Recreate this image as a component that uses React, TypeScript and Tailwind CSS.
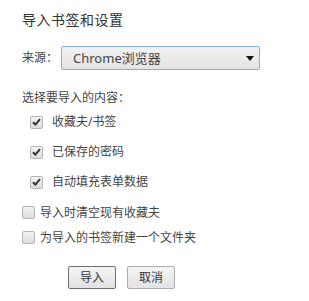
import React from "react";

const font = { fontFamily: '"Noto Sans", "Noto Sans CJK SC", sans-serif' };

function CheckBox({ checked }: { checked: boolean }) {
  return (
    <span className="relative flex h-[13px] w-[13px] items-center justify-center rounded-[2px] border border-[#b5b5b5] bg-gradient-to-b from-[#f4f4f4] to-[#dcdcdc]">
      {checked && (
        <svg width="9" height="8" viewBox="0 0 9 8">
          <path d="M1 4.2 L3.4 6.6 L8 1.2" fill="none" stroke="#333" strokeWidth="2" />
        </svg>
      )}
    </span>
  );
}

function Row({ checked, label, indent }: { checked: boolean; label: string; indent: boolean }) {
  return (
    <div className={`flex items-center ${indent ? "h-[30px] pl-[8px]" : "h-[25px]"}`}>
      <CheckBox checked={checked} />
      <span className={`${indent ? "ml-[9px]" : "ml-[5px]"} text-[12px] leading-[16px] text-[#444]`}>{label}</span>
    </div>
  );
}

export default function App() {
  return (
    <div className="h-[301px] w-[309px] bg-white pl-[22px] pt-[10px]" style={font}>
      <div className="text-[14px] leading-[20px] tracking-[0.5px] text-[#333]">导入书签和设置</div>
      <div className="mt-[16px] flex h-[24px] items-center">
        <span className="w-[39px] text-[12px] leading-[16px] text-[#444]">来源：</span>
        <div className="flex h-[24px] w-[199px] items-center justify-between rounded-[2px] border border-[#7fb0ea] bg-gradient-to-b from-[#f3f3f3] to-[#e3e3e3] pl-[11px] pr-[5px]">
          <span className="text-[13px] leading-[16px] text-[#444]">Chrome浏览器</span>
          <svg width="8" height="5" viewBox="0 0 8 5">
            <path d="M0 0 H8 L4 5 Z" fill="#111" />
          </svg>
        </div>
      </div>
      <div className="mt-[20px] text-[12px] leading-[16px] text-[#444]">选择要导入的内容：</div>
      <div className="mt-[1px]">
        <Row checked label="收藏夫/书签" indent />
        <Row checked label="已保存的密码" indent />
        <Row checked label="自动填充表单数据" indent />
      </div>
      <div className="mt-[3px]">
        <Row checked={false} label="导入时清空现有收藏夫" indent={false} />
        <Row checked={false} label="为导入的书签新建一个文件夹" indent={false} />
      </div>
      <div className="mt-[16px] flex gap-[11px] pl-[46px]">
        <button className="flex h-[23px] w-[48px] items-center justify-center rounded-[2px] border border-[#707070] bg-gradient-to-b from-[#f5f5f5] to-[#e2e2e2] text-[12px] text-[#333]">
          导入
        </button>
        <button className="flex h-[23px] w-[48px] items-center justify-center rounded-[2px] border border-[#acacac] bg-gradient-to-b from-[#f5f5f5] to-[#e2e2e2] text-[12px] text-[#333]">
          取消
        </button>
      </div>
    </div>
  );
}
